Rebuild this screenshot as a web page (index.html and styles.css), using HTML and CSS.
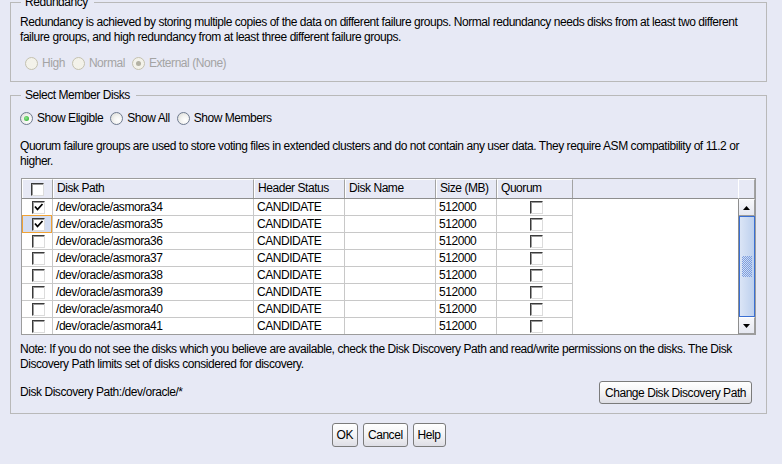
FILE: index.html
```html
<!DOCTYPE html>
<html>
<head>
<meta charset="utf-8">
<link rel="stylesheet" href="styles.css">
</head>
<body>
<fieldset class="group group-redundancy">
  <legend>Redundancy</legend>
  <p class="desc">Redundancy is achieved by storing multiple copies of the data on different failure groups. Normal redundancy needs disks from at least two different<br>failure groups, and high redundancy from at least three different failure groups.</p>
  <div class="radios disabled">
    <span class="radio"><span class="rb"></span>High</span>
    <span class="radio"><span class="rb"></span>Normal</span>
    <span class="radio"><span class="rb on"></span>External (None)</span>
  </div>
</fieldset>

<fieldset class="group group-disks">
  <legend>Select Member Disks</legend>
  <div class="radios">
    <span class="radio"><span class="rb on"></span>Show Eligible</span>
    <span class="radio"><span class="rb"></span>Show All</span>
    <span class="radio"><span class="rb"></span>Show Members</span>
  </div>
  <p class="desc quorum">Quorum failure groups are used to store voting files in extended clusters and do not contain any user data. They require ASM compatibility of 11.2 or<br>higher.</p>

  <div class="scrollpane">
    <div class="thead">
      <div class="th c1"><span class="cb"></span></div>
      <div class="th c2">Disk Path</div>
      <div class="th c3">Header Status</div>
      <div class="th c4">Disk Name</div>
      <div class="th c5">Size (MB)</div>
      <div class="th c6h">Quorum</div>
    </div>
    <div class="corner"></div>
    <div class="tbody">
      <div class="tr"><div class="td c1"><span class="cb checked"><svg viewBox="0 0 11 11" width="11" height="11"><polyline points="2,4.5 4.5,7.5 9.5,2" /></svg></span></div><div class="td c2">/dev/oracle/asmora34</div><div class="td c3">CANDIDATE</div><div class="td c4"></div><div class="td c5">512000</div><div class="td c6"><span class="cb"></span></div></div>
      <div class="tr"><div class="td c1 focus"><span class="cb checked"><svg viewBox="0 0 11 11" width="11" height="11"><polyline points="2,4.5 4.5,7.5 9.5,2" /></svg></span></div><div class="td c2">/dev/oracle/asmora35</div><div class="td c3">CANDIDATE</div><div class="td c4"></div><div class="td c5">512000</div><div class="td c6"><span class="cb"></span></div></div>
      <div class="tr"><div class="td c1"><span class="cb"></span></div><div class="td c2">/dev/oracle/asmora36</div><div class="td c3">CANDIDATE</div><div class="td c4"></div><div class="td c5">512000</div><div class="td c6"><span class="cb"></span></div></div>
      <div class="tr"><div class="td c1"><span class="cb"></span></div><div class="td c2">/dev/oracle/asmora37</div><div class="td c3">CANDIDATE</div><div class="td c4"></div><div class="td c5">512000</div><div class="td c6"><span class="cb"></span></div></div>
      <div class="tr"><div class="td c1"><span class="cb"></span></div><div class="td c2">/dev/oracle/asmora38</div><div class="td c3">CANDIDATE</div><div class="td c4"></div><div class="td c5">512000</div><div class="td c6"><span class="cb"></span></div></div>
      <div class="tr"><div class="td c1"><span class="cb"></span></div><div class="td c2">/dev/oracle/asmora39</div><div class="td c3">CANDIDATE</div><div class="td c4"></div><div class="td c5">512000</div><div class="td c6"><span class="cb"></span></div></div>
      <div class="tr"><div class="td c1"><span class="cb"></span></div><div class="td c2">/dev/oracle/asmora40</div><div class="td c3">CANDIDATE</div><div class="td c4"></div><div class="td c5">512000</div><div class="td c6"><span class="cb"></span></div></div>
      <div class="tr"><div class="td c1"><span class="cb"></span></div><div class="td c2">/dev/oracle/asmora41</div><div class="td c3">CANDIDATE</div><div class="td c4"></div><div class="td c5">512000</div><div class="td c6"><span class="cb"></span></div></div>
    </div>
    <div class="vscroll">
      <div class="sbtn"><svg viewBox="0 0 7 4" width="7" height="4"><polygon points="0,4 7,4 3.5,0" /></svg></div>
      <div class="thumb"><span class="grip"></span></div>
      <div class="sbtn"><svg viewBox="0 0 7 4" width="7" height="4"><polygon points="0,0 7,0 3.5,4" /></svg></div>
    </div>
  </div>

  <p class="desc note">Note: If you do not see the disks which you believe are available, check the Disk Discovery Path and read/write permissions on the disks. The Disk<br>Discovery Path limits set of disks considered for discovery.</p>

  <div class="path-row">
    <span>Disk Discovery Path:/dev/oracle/*</span>
    <button class="btn btn-change">Change Disk Discovery Path</button>
  </div>
</fieldset>

<div class="buttons">
  <button class="btn">OK</button>
  <button class="btn">Cancel</button>
  <button class="btn">Help</button>
</div>
</body>
</html>
```

FILE: styles.css
```css
* { box-sizing: border-box; }
html, body { margin: 0; padding: 0; background: #e7e9f5; }
body {
  font-family: "Liberation Sans", Arial, sans-serif;
  font-size: 12px;
  line-height: 15px;
  letter-spacing: -0.45px;
  color: #000;
  width: 782px;
  height: 464px;
  overflow: hidden;
}

.group {
  margin: 0 15px 0 10px;
  padding: 6px 9px 10px 9px;
  border: 1px solid #b9b9b9;
  min-width: 0;
}
.group legend {
  margin-left: 1px;
  padding: 0 6px 0 4px;
  line-height: 14px;
}
.group-redundancy { margin-top: -5px; }
.group-disks { margin-top: 6px; padding-top: 8px; padding-bottom: 9px; }

.desc { margin: 0; white-space: nowrap; }
.quorum { margin-top: 13px; }
.note { margin-top: 7px; }

.radios { display: flex; align-items: center; height: 16px; }
.radio { display: flex; align-items: center; margin-right: 7px; }
.rb {
  position: relative;
  width: 13px;
  height: 13px;
  margin-right: 4px;
  border-radius: 50%;
  border: 1px solid #6f7b90;
  background: radial-gradient(circle at 65% 65%, #ffffff 0, #f4f4f2 40%, #d8d8d2 100%);
}
.rb.on::after {
  content: "";
  position: absolute;
  left: 3px;
  top: 3px;
  width: 5px;
  height: 5px;
  border-radius: 50%;
  background: radial-gradient(circle at 40% 40%, #8ee68e, #22a522);
}
.radios.disabled { color: #a4a4a4; margin-top: 10px; margin-left: 5px; }
.radios.disabled .rb { border-color: #c4c1b0; background: #f3f2ea; }
.radios.disabled .rb.on::after { background: #b3b1a3; }

/* table */
.scrollpane {
  margin: 9px 0 0 1px;
  width: 735px;
  border: 1px solid #9c9c9c;
  background: #fff;
  display: grid;
  grid-template-columns: 716px 17px;
  grid-template-rows: 20px 135px;
}
.thead {
  display: flex;
  background: #e7e9f5;
  border-bottom: 1px solid #8e8e8e;
}
.th {
  border-left: 1px solid #ffffff;
  border-right: 1px solid #a3a3a3;
  border-top: 1px solid #ffffff;
  padding-left: 3px;
  line-height: 17px;
  white-space: nowrap;
}
.c1 { width: 31px; display: flex; align-items: center; justify-content: center; padding-left: 0; }
.c2 { width: 201px; }
.c3 { width: 91px; }
.c4 { width: 91px; }
.c5 { width: 61px; }
.c6 { width: 76px; display: flex; align-items: center; justify-content: center; padding-left: 0; }
.c6h { width: 76px; }
.corner {
  background: #e7e9f5;
  border-bottom: 1px solid #8e8e8e;
  border-left: 1px solid #ffffff;
  border-top: 1px solid #ffffff;
  border-right: 1px solid #a3a3a3;
}
.tbody { overflow: hidden; }
.tr {
  display: flex;
  width: 551px;
  height: 17px;
  border-bottom: 1px solid #c8c8c8;
}
.td {
  position: relative;
  height: 16px;
  border-right: 1px solid #c8c8c8;
  padding-left: 3px;
  line-height: 16px;
  white-space: nowrap;
}
.td.focus { background: #d3ddf2; }
.td.focus::after {
  content: "";
  position: absolute;
  left: 0;
  right: 0;
  top: -1px;
  bottom: -1px;
  border: 1px solid #f0a235;
}

.cb {
  display: inline-flex;
  align-items: center;
  justify-content: center;
  width: 13px;
  height: 13px;
  background: #fff;
  border: 1px solid;
  border-color: #3a3a3a #dcdcdc #dcdcdc #3a3a3a;
  box-shadow: inset 1px 1px 0 #9a9a9a;
}
.cb svg polyline { fill: none; stroke: #000; stroke-width: 1.8; }

.vscroll {
  display: flex;
  flex-direction: column;
  border-left: 1px solid #8e8e8e;
}
.sbtn {
  height: 17px;
  display: flex;
  align-items: center;
  justify-content: center;
  background: linear-gradient(#f7f8fb, #e6e8f1);
  border: 1px solid #9d9d9d;
  border-left: 0;
  border-top-color: #ffffff;
}
.sbtn svg polygon { fill: #000; }
.thumb {
  flex: 1;
  display: flex;
  align-items: center;
  justify-content: center;
  border: 1px solid #3a6fd3;
  background: linear-gradient(to right, #dbe5f6, #bdd0ee);
}
.grip {
  width: 10px;
  height: 21px;
  background: repeating-conic-gradient(#7d9de0 0 25%, transparent 0 50%) 0 0 / 2px 2px;
}

.path-row {
  margin-top: 9px;
  display: flex;
  align-items: center;
  justify-content: space-between;
}

.btn {
  font-family: inherit;
  font-size: 12px;
  letter-spacing: inherit;
  color: #000;
  height: 24px;
  padding: 0 4px;
  border: 1px solid #7b7b7b;
  border-radius: 3px;
  background: linear-gradient(#ffffff 0%, #f3f3f5 50%, #dedee5 100%);
}
.btn-change { height: 23px; margin-right: 5px; padding: 0 5px; }

.buttons {
  margin: 9px 15px 0 10px;
  display: flex;
  justify-content: center;
  gap: 5px;
}
```
